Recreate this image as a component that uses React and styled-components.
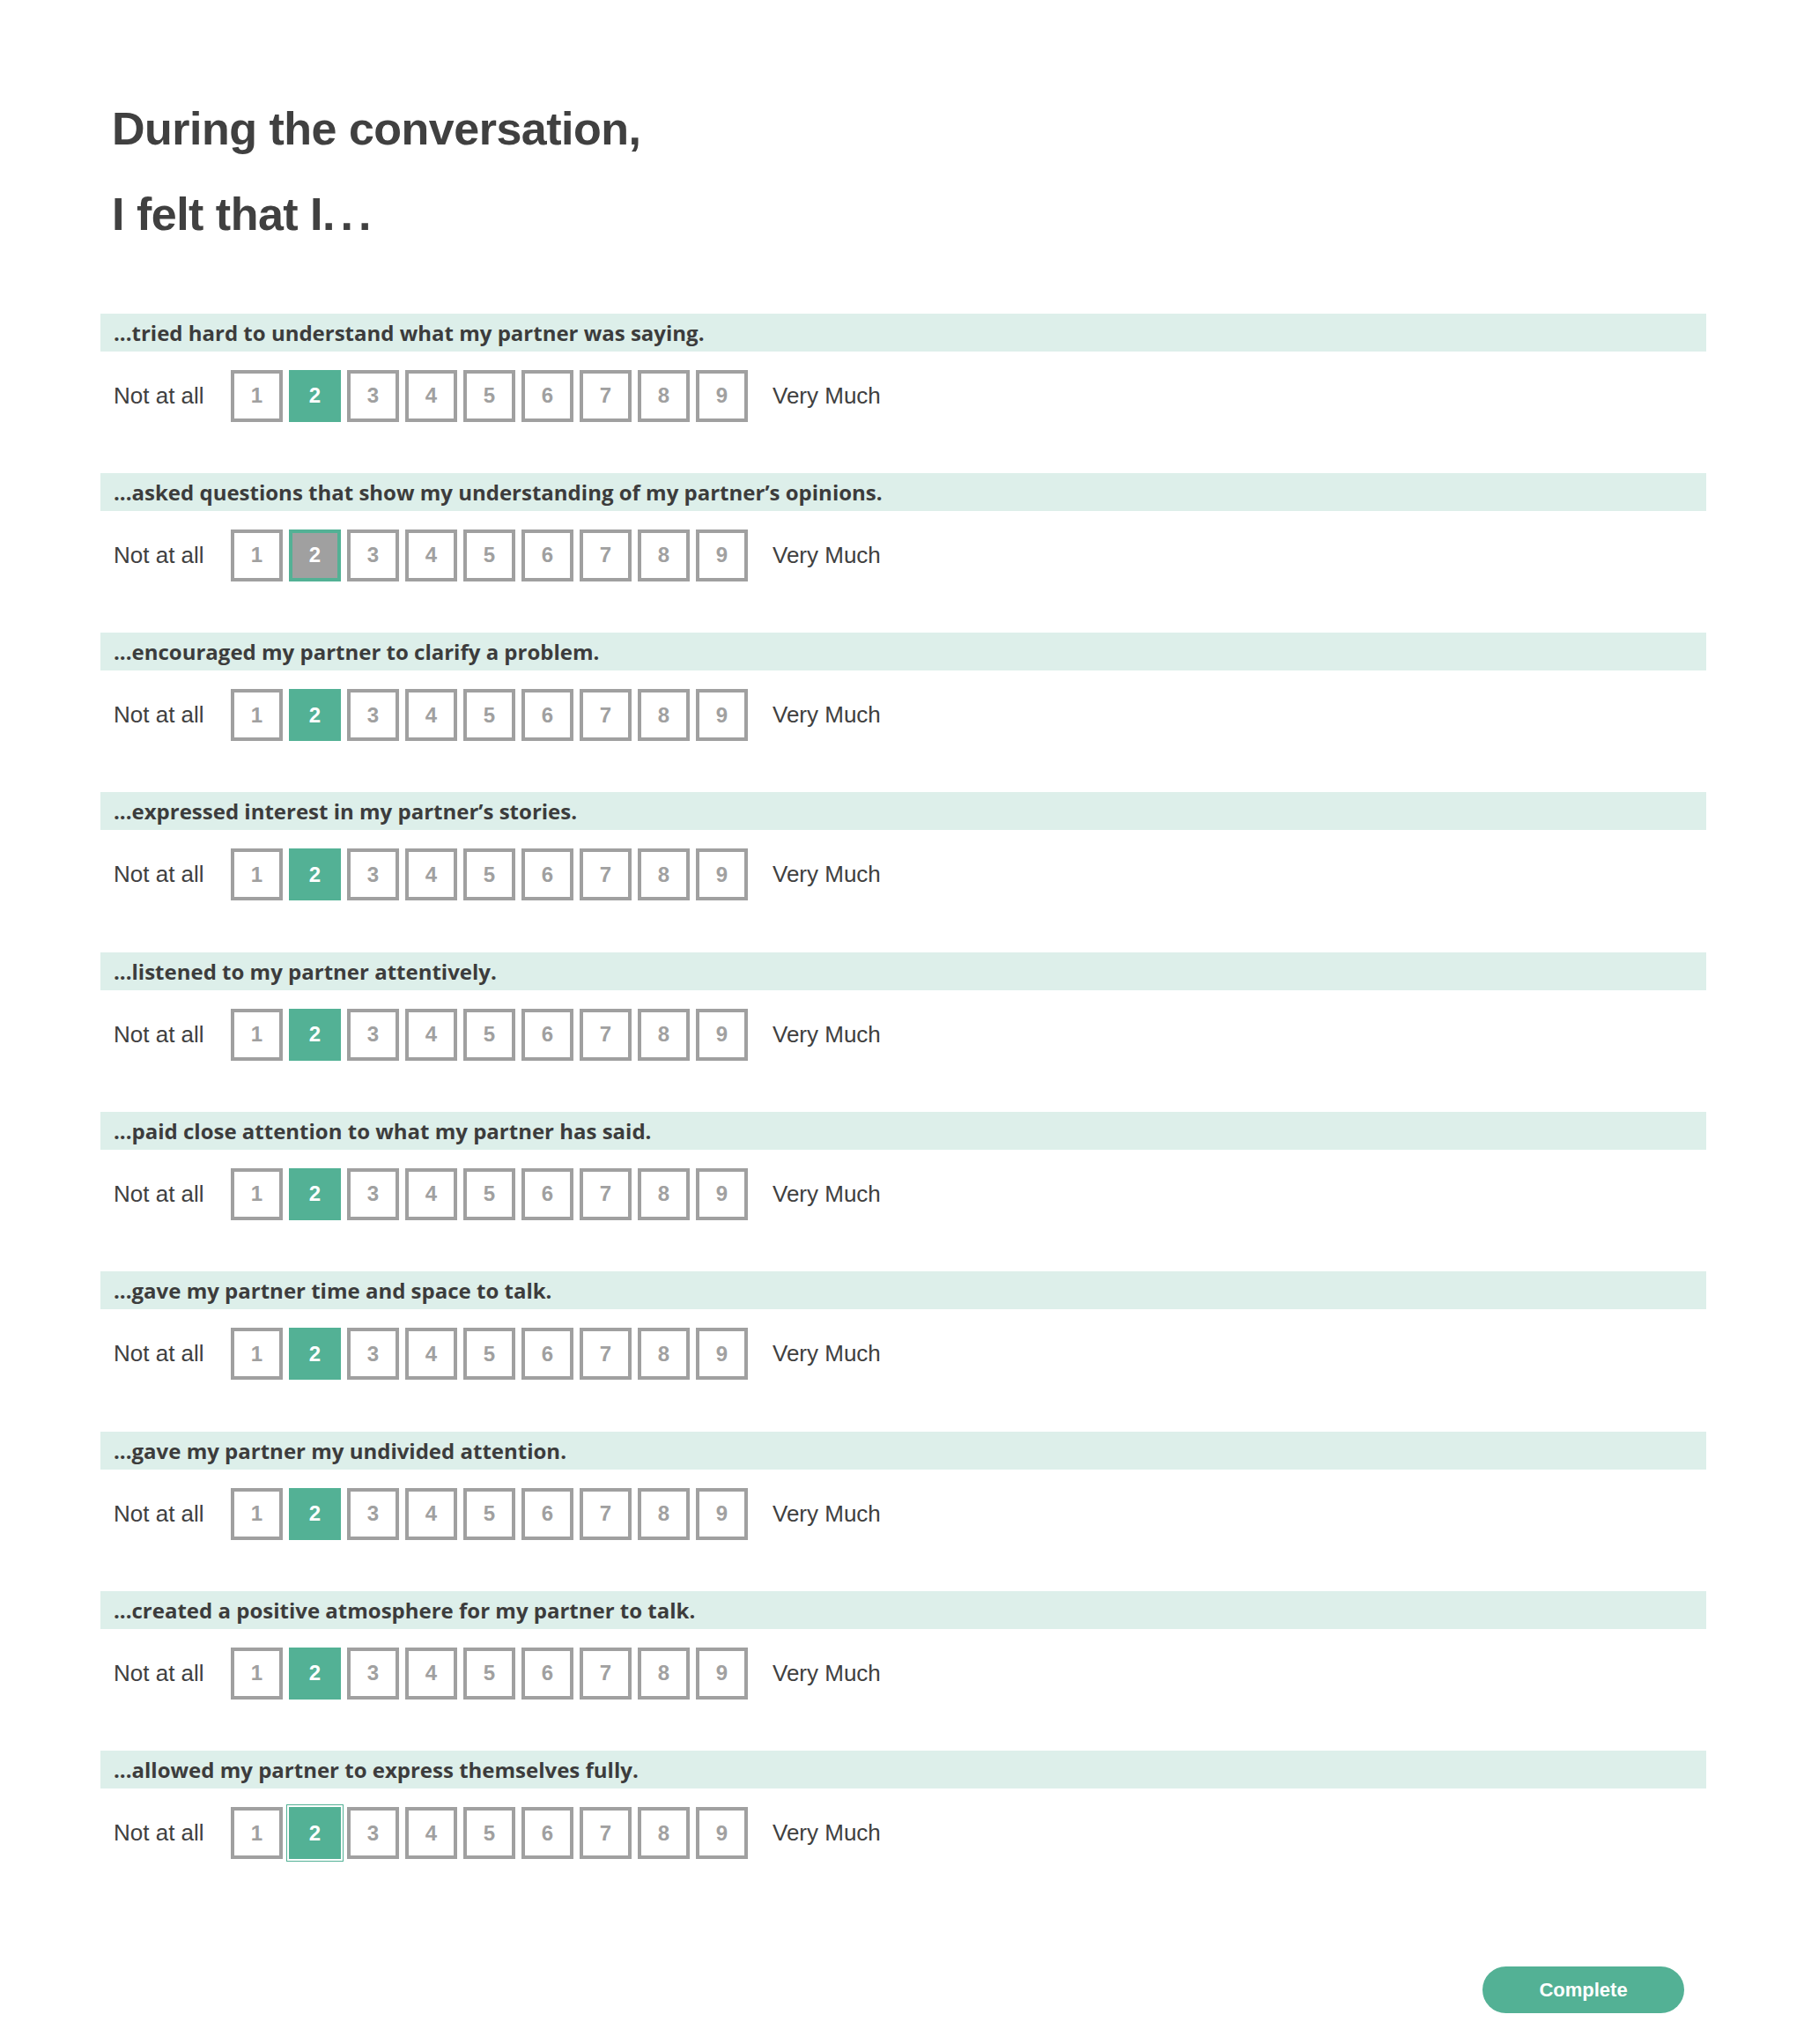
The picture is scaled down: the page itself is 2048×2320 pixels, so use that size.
import React from 'react';
import styled, { createGlobalStyle } from 'styled-components';

const GlobalStyle = createGlobalStyle`
  html, body { margin: 0; padding: 0; background: #ffffff; }
  body { font-family: "Liberation Sans", Arial, Helvetica, sans-serif; color: #404040; }
  * { box-sizing: border-box; }
`;

const GREEN = '#53b195';
const GRAY = '#a0a0a0';

const Page = styled.main`
  width: 100%;
  padding: 98px 111px 34px 114px;
  display: flex;
  flex-direction: column;
`;

const Heading = styled.h1`
  margin: 0 0 63.5px 0;
  padding-left: 13px;
  font-family: "Liberation Sans", Arial, Helvetica, sans-serif;
  font-weight: 700;
  font-size: 52px;
  line-height: 97px;
  color: #404040;
  letter-spacing: -0.5px;
`;

const Dots = styled.span`
  letter-spacing: 6px;
`;

const Section = styled.section`
  display: flex;
  flex-direction: column;
  margin-bottom: 58.3px;
  &:last-of-type { margin-bottom: 0; }
`;

const Band = styled.div`
  height: 43px;
  background: #ddefea;
  padding-left: 15px;
  display: flex;
  align-items: center;
  font-family: "Open Sans", "Lato", sans-serif;
  font-weight: 700;
  font-size: 24px;
  line-height: 43px;
  letter-spacing: 0;
  color: #3c3c3c;
`;

const Row = styled.div`
  margin-top: 21px;
  height: 59px;
  padding-left: 15px;
  display: flex;
  align-items: center;
`;

const EndLabel = styled.span`
  width: ${p => p.$width}px;
  flex: none;
  font-size: 26px;
  color: #404040;
  padding-left: ${p => p.$pad || 0}px;
`;

const Boxes = styled.div`
  display: flex;
  gap: 7px;
  flex: none;
`;

const Box = styled.button`
  width: 59px;
  height: 59px;
  padding: 0;
  margin: 0;
  border: 4px solid ${p => (p.$state === 'idle' ? GRAY : GREEN)};
  background: ${p => (p.$state === 'idle' ? '#ffffff' : p.$state === 'hover' ? GRAY : GREEN)};
  color: ${p => (p.$state === 'idle' ? GRAY : '#ffffff')};
  font-family: "Liberation Sans", Arial, Helvetica, sans-serif;
  font-weight: 700;
  font-size: 24px;
  display: flex;
  align-items: center;
  justify-content: center;
  cursor: pointer;
  outline: ${p => (p.$focus ? `1.5px solid ${GREEN}` : 'none')};
  outline-offset: 2px;
`;

const Footer = styled.div`
  margin-top: 122px;
  display: flex;
  justify-content: flex-end;
  padding-right: 25px;
`;

const CompleteButton = styled.button`
  width: 229px;
  height: 53px;
  border: none;
  border-radius: 27px;
  background: ${GREEN};
  color: #ffffff;
  font-family: "Liberation Sans", Arial, Helvetica, sans-serif;
  font-weight: 700;
  font-size: 22px;
  cursor: pointer;
`;

const questions = [
  '...tried hard to understand what my partner was saying.',
  '...asked questions that show my understanding of my partner\u2019s opinions.',
  '...encouraged my partner to clarify a problem.',
  '...expressed interest in my partner\u2019s stories.',
  '...listened to my partner attentively.',
  '...paid close attention to what my partner has said.',
  '...gave my partner time and space to talk.',
  '...gave my partner my undivided attention.',
  '...created a positive atmosphere for my partner to talk.',
  '...allowed my partner to express themselves fully.',
];

const values = [1, 2, 3, 4, 5, 6, 7, 8, 9];

export default function App() {
  return (
    <>
      <GlobalStyle />
      <Page>
        <Heading>
          During the conversation,
          <br />
          I felt that I<Dots>...</Dots>
        </Heading>
        {questions.map((q, qi) => (
          <Section key={qi}>
            <Band>{q}</Band>
            <Row>
              <EndLabel $width={133}>Not at all</EndLabel>
              <Boxes>
                {values.map(v => {
                  let state = 'idle';
                  if (v === 2) state = qi === 1 ? 'hover' : 'selected';
                  return (
                    <Box key={v} $state={state} $focus={v === 2 && qi === 9}>
                      {v}
                    </Box>
                  );
                })}
              </Boxes>
              <EndLabel $width={160} $pad={28}>Very Much</EndLabel>
            </Row>
          </Section>
        ))}
        <Footer>
          <CompleteButton>Complete</CompleteButton>
        </Footer>
      </Page>
    </>
  );
}
